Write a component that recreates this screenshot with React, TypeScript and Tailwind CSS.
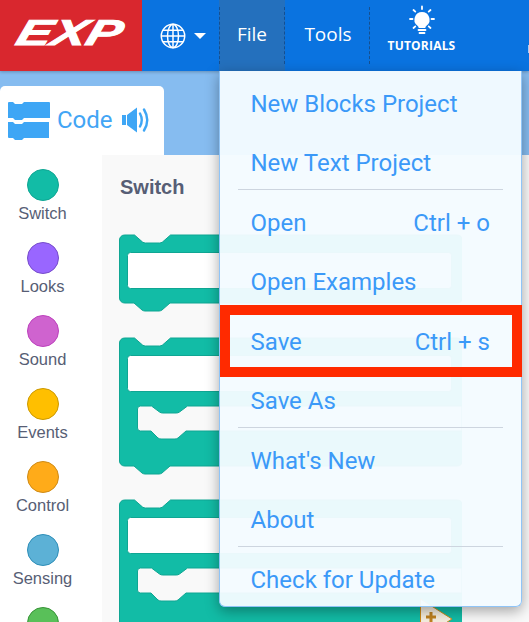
const sans = "font-['Liberation_Sans',Arial,sans-serif]";

const categories = [
  { name: "Switch", fill: "bg-[#12bca6]", line: "border-[#0fa693]" },
  { name: "Looks", fill: "bg-[#9966ff]", line: "border-[#774dcb]" },
  { name: "Sound", fill: "bg-[#cf63cf]", line: "border-[#bd42bd]" },
  { name: "Events", fill: "bg-[#ffbf00]", line: "border-[#cc9900]" },
  { name: "Control", fill: "bg-[#ffab19]", line: "border-[#cf8b17]" },
  { name: "Sensing", fill: "bg-[#5cb1d6]", line: "border-[#2e8eb8]" },
  { name: "", fill: "bg-[#59c059]", line: "border-[#389438]" },
];

const menu: { label: string; keys?: string; rule?: boolean }[] = [
  { label: "New Blocks Project" },
  { label: "New Text Project", rule: true },
  { label: "Open", keys: "Ctrl + o" },
  { label: "Open Examples" },
  { label: "Save", keys: "Ctrl + s" },
  { label: "Save As", rule: true },
  { label: "What's New" },
  { label: "About", rule: true },
  { label: "Check for Update" },
];

function GlobeIcon() {
  return (
    <svg width="26" height="26" viewBox="0 0 26 26" fill="none" stroke="#fff" strokeWidth="1.500" className="shrink-0">
      <circle cx="13" cy="13" r="11.700" />
      <ellipse cx="13" cy="13" rx="5.500" ry="11.700" />
      <path d="M13 1.300v23.400M1.300 13h23.400M3 7.200h20M3 18.800h20" />
    </svg>
  );
}

function BulbIcon() {
  return (
    <svg width="30" height="30" viewBox="0 0 30 30" className="shrink-0">
      <path
        d="M15 7a7.600 7.600 0 0 0-5 13.300c1 1 1.600 1.700 1.700 2.700h6.600c.1-1 .7-1.700 1.700-2.700A7.600 7.600 0 0 0 15 7Z"
        fill="#fff"
      />
      <path d="M11.500 25h7M12.500 28h5" stroke="#fff" strokeWidth="1.800" strokeLinecap="round" />
      <path
        d="M15 1.500v2.500M6.500 5l1.800 1.600M23.500 5l-1.800 1.600M3 14h2.500M24.500 14H27M6.500 23l1.800-1.600M23.500 23l-1.800-1.600"
        stroke="#fff"
        strokeWidth="1.800"
        strokeLinecap="round"
      />
    </svg>
  );
}

function SpeakerIcon() {
  return (
    <svg width="29" height="26" viewBox="0 0 29 26" fill="none" className="shrink-0">
      <path d="M0 8h4v10H0ZM5 8l10-7.500v25L5 18Z" fill="#3ea6f5" />
      <path d="M18 6.500q3.500 6.500 0 13M22 2.500q6.500 10.500 0 21" stroke="#3ea6f5" strokeWidth="2.400" strokeLinecap="round" />
    </svg>
  );
}

function HatBlock() {
  return (
    <svg width="343" height="79" viewBox="0 0 343 79" className="block">
      <path
        d="M.5 6a5 5 0 0 1 5-5h10l8 7q1.500 1 3 1h14q1.500 0 3-1l8-7h287a5 5 0 0 1 5 5v58a5 5 0 0 1-5 5H51l-8 7q-1.500 1-3 1H26q-1.500 0-3-1l-8-7H5.500a5 5 0 0 1-5-5Z"
        fill="#12bca6"
        stroke="#0fa693"
      />
      <rect x="8.500" y="18.500" width="324" height="36" rx="3" fill="#fff" stroke="#0fa693" />
    </svg>
  );
}

function MouthBlock({ last }: { last?: boolean }) {
  const h = last ? 123 : 138;
  return (
    <svg width="343" height={h} viewBox={`0 0 343 ${h}`} className="block">
      <path
        d="M.5 6a5 5 0 0 1 5-5h10l8 7q1.500 1 3 1h14q1.500 0 3-1l8-7h287a5 5 0 0 1 5 5v118a5 5 0 0 1-5 5H51l-8 7q-1.500 1-3 1H26q-1.500 0-3-1l-8-7H5.500a5 5 0 0 1-5-5Z"
        fill="#12bca6"
        stroke="#0fa693"
      />
      <rect x="8.500" y="18.500" width="324" height="36" rx="3" fill="#fff" stroke="#0fa693" />
      <path
        d="M18.500 72a3 3 0 0 1 3-3h11l8 6q1.500 1 3 1h14q1.500 0 3-1l8-6H343v25H67l-8 7q-1.500 1-3 1H42q-1.500 0-3-1l-7-7H21.500a3 3 0 0 1-3-3Z"
        fill="#f9f9f9"
        stroke="#0fa693"
      />
      {last && (
        <>
          <path d="M301.500 100 333 120l-31.500 20Z" fill="#f6efe0" stroke="#cf8b17" />
          <path d="M307 118h10M312 113v10" stroke="#c0821f" strokeWidth="3" />
        </>
      )}
    </svg>
  );
}

export default function App() {
  return (
    <div className="relative flex h-[622px] w-[529px] flex-col overflow-hidden bg-white">
      <header className="z-10 flex h-[71px] shrink-0 bg-[#0a73e0] font-['Open_Sans',sans-serif] text-white shadow-[0_1px_3px_rgba(0,0,0,0.25)]">
        <div className="flex w-[142px] shrink-0 items-center justify-center bg-[#d9272e] pr-[2px] pb-[5px]">
          <span className={`${sans} scale-x-[1.45] -skew-x-12 text-[36px] leading-none font-bold italic [-webkit-text-stroke:1px_white]`}>EXP</span>
        </div>
        <div className="flex w-[77px] shrink-0 items-center gap-[8px] pl-[18px]">
          <GlobeIcon />
          <span className="h-0 w-0 border-x-[6.500px] border-t-[6.500px] border-x-transparent border-t-white" />
        </div>
        <div className="flex w-[66px] shrink-0 bg-[#2470bd] text-[19px]">
          <span className="my-[7px] border-l border-dashed border-l-[#164f8f]" />
          <span className="flex flex-1 items-center justify-center pb-[2px]">File</span>
          <span className="my-[7px] border-l border-dashed border-l-[#164f8f]" />
        </div>
        <div className="flex w-[84px] shrink-0 items-center justify-center pb-[2px] pl-[2px] text-[19px]">Tools</div>
        <div className="my-[7px] shrink-0 border-l border-dashed border-l-[#164f8f]" />
        <div className="ml-[17px] flex w-[69px] shrink-0 flex-col items-center pt-[5px]">
          <BulbIcon />
          <span className="mt-[3px] text-[12px] leading-[16px] font-bold tracking-[0.2px]">TUTORIALS</span>
        </div>
        <span className="mt-[45px] ml-[72px] h-[8px] w-[3px] shrink-0 bg-[#a9ccf3]" />
      </header>

      <div className="flex h-[84px] shrink-0 items-end bg-[#86bcf0]">
        <div className="flex h-[69px] w-[164px] items-start rounded-t-[5px] bg-white pt-[15px] pl-[8px] font-['Roboto',sans-serif] text-[#42a5f5]">
          <svg width="42" height="39" viewBox="0 0 42 39" className="shrink-0">
            <path
              d="M0 2q0-1 1-1h4l2 2h7l2-2h25q1 0 1 1v15H16l-2 2H7l-2-2H0ZM0 21h5l2 2h7l2-2h25v16H16l-2 2H7l-2-2H1q-1 0-1-1Z"
              fill="#3ea6f5"
            />
          </svg>
          <span className="ml-[7px] text-[24px] leading-[38px]">Code</span>
          <span className="mt-[6px] ml-[9px]">
            <SpeakerIcon />
          </span>
        </div>
      </div>

      <div className="flex min-h-0 flex-1">
        <aside className={`${sans} flex w-[102px] shrink-0 flex-col pt-[14px] text-[16.500px] leading-[18px] text-[#575e75]`}>
          {categories.map((c) => (
            <div key={c.fill} className="flex h-[73px] w-[85px] shrink-0 flex-col items-center">
              <span className={`h-[32px] w-[32px] rounded-full border ${c.fill} ${c.line}`} />
              <span className="mt-[3px]">{c.name}</span>
            </div>
          ))}
        </aside>
        <main className={`${sans} flex-1 bg-[#f9f9f9] pl-[17px]`}>
          <h2 className="pt-[20px] pl-[1px] text-[20px] leading-[24px] font-bold text-[#575e75]">Switch</h2>
          <div className="mt-[35px] flex flex-col gap-[24px]">
            <HatBlock />
            <MouthBlock />
            <MouthBlock last />
          </div>
        </main>
      </div>

      {/* file dropdown */}
      <div className="absolute top-[71px] left-[219px] z-20 flex h-[536px] w-[303px] flex-col rounded-b-[6px] border border-t-0 border-[#8fc4f7] bg-[#f4fbff]/96 pt-[3px] font-['Roboto',sans-serif] text-[24px] text-[#3b99f8] shadow-[0_4px_14px_rgba(0,0,0,0.35)]">
        {menu.map((m) => (
          <div key={m.label} className="relative flex h-[59.500px] shrink-0 items-center justify-between pr-[31px] pl-[30.500px]">
            <span>{m.label}</span>
            {m.keys && <span>{m.keys}</span>}
            {m.rule && <div className="absolute right-[18px] bottom-[3px] left-[18px] border-b border-[#cdd5df]" />}
          </div>
        ))}
      </div>

      {/* red highlight round Save */}
      <div className="absolute top-[305px] left-[220px] z-30 h-[72px] w-[302px] border-[10px] border-[#ff2a00]" />
    </div>
  );
}
